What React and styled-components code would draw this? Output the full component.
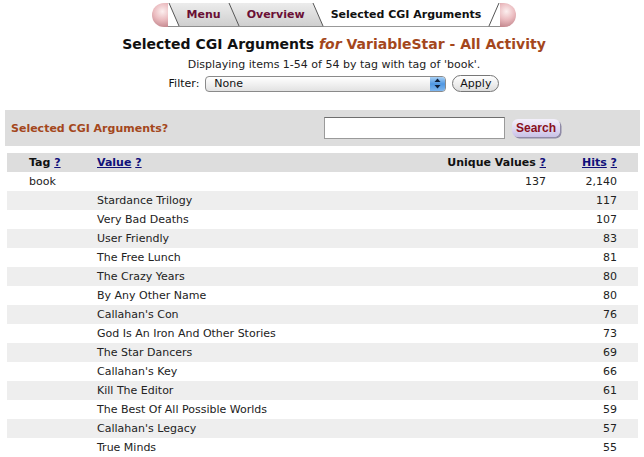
import React from 'react';
import styled, {createGlobalStyle} from 'styled-components';

const GlobalStyle = createGlobalStyle`
  body {
    margin: 0;
    background: #fff;
    font-family: "DejaVu Sans", Verdana, sans-serif;
    color: #111;
  }
`;

const Page = styled.div`
  width: 644px;
  padding: 0 4px;
  box-sizing: border-box;
`;

// everything in the head block is centred a bit right of the page middle
const Header = styled.div`
  padding-left: 24px;
`;

const TabBarWrap = styled.div`
  display: flex;
  justify-content: center;
  padding-top: 3px;
  height: 27px;
  box-sizing: border-box;
`;

const TabBar = styled.div`
  display: flex;
  align-items: stretch;
  height: 24px;
`;

const Cap = styled.div`
  width: 16px;
  background: radial-gradient(circle at ${p => (p.$right ? '40%' : '65%')} 35%, #fcefef 0%, #ebbcc0 45%, #b8787f 100%);
  border-radius: ${p => (p.$right ? '0 12px 12px 0' : '12px 0 0 12px')};
`;

const Tab = styled.div`
  display: flex;
  align-items: center;
  padding: 0 7px;
  font-size: 11px;
  font-weight: bold;
  color: ${p => (p.$active ? '#111' : '#6a0f35')};
  background: ${p => (p.$active ? '#fff' : 'linear-gradient(#ececec, #cfcfcf)')};
  border-bottom: 1px solid ${p => (p.$active ? '#999' : '#8e8e8e')};
  box-sizing: border-box;
`;

const SepBox = styled.svg`
  display: block;
  width: 12px;
  height: 24px;
`;

const Sep = ({id, left, right, dir = 'back'}) => {
  const fill = c => (c === 'g' ? `url(#${id})` : c);
  const back = dir === 'back';
  return (
    <SepBox viewBox="0 0 12 24">
      <defs>
        <linearGradient id={id} x1="0" y1="0" x2="0" y2="1">
          <stop offset="0" stopColor="#ececec" />
          <stop offset="1" stopColor="#cfcfcf" />
        </linearGradient>
      </defs>
      <polygon points={back ? '0,0 1,0 11,23 0,23' : '0,0 11,0 1,23 0,23'} fill={fill(left)} />
      <polygon points={back ? '1,0 12,0 12,23 11,23' : '11,0 12,0 12,23 1,23'} fill={fill(right)} />
      <line x1={back ? 1 : 11} y1="0" x2={back ? 11 : 1} y2="23" stroke="#555" strokeWidth="1" />
      <line x1="0" y1="23.5" x2="12" y2="23.5" stroke="#8e8e8e" strokeWidth="1" />
    </SepBox>
  );
};

const Title = styled.h1`
  margin: 9px 0 0;
  text-align: center;
  font-size: 14px;
  font-weight: bold;
  color: #111;
`;

const Accent = styled.span`
  color: #a4471c;
  font-style: ${p => (p.$italic ? 'italic' : 'normal')};
`;

const Subtitle = styled.div`
  margin-top: 6px;
  text-align: center;
  font-size: 11px;
  color: #222;
`;

const FilterRow = styled.div`
  display: flex;
  justify-content: center;
  align-items: center;
  gap: 6px;
  margin-top: 4px;
  font-size: 11px;
`;

const Select = styled.div`
  position: relative;
  width: 241px;
  height: 16px;
  border: 1px solid #8a8a8a;
  border-radius: 4px;
  background: linear-gradient(#ffffff, #f1f1f1 50%, #e2e2e2);
  box-sizing: border-box;
  display: flex;
  align-items: center;
  padding-left: 8px;
  font-size: 11px;
  overflow: hidden;
`;

const Stepper = styled.div`
  position: absolute;
  right: 0;
  top: 0;
  bottom: 0;
  width: 15px;
  background: linear-gradient(#a9d1f5, #4f97e3 50%, #7fb7ef);
  display: flex;
  align-items: center;
  justify-content: center;
`;

const PillButton = styled.div`
  height: 17px;
  padding: 0 7px;
  border: 1px solid #777;
  border-radius: 9px;
  background: linear-gradient(#fff, #ececec 60%, #dcdcdc);
  display: flex;
  align-items: center;
  font-size: 11px;
  box-sizing: border-box;
`;

const SearchBar = styled.div`
  margin-top: 18px;
  height: 36px;
  background: #dddddd;
  display: flex;
  align-items: center;
  padding: 0 80px 0 6px;
  margin-left: 1px;
`;

const SearchLabel = styled.div`
  flex: 1;
  font-size: 11px;
  font-weight: bold;
  color: #a4471c;
`;

const SearchInput = styled.div`
  width: 181px;
  height: 22px;
  background: #fff;
  border: 1px solid #9a9a9a;
  border-top-color: #6e6e6e;
  box-sizing: border-box;
`;

const SearchButton = styled.div`
  margin-left: 7px;
  height: 18px;
  padding: 0 4px;
  border-radius: 6px;
  background: linear-gradient(#f3f0fb, #dcd6f0 60%, #c9c1e6);
  box-shadow: 1.5px 1.5px 0 #8f8aa6;
  display: flex;
  align-items: center;
  font-family: "Liberation Sans", Arial, sans-serif;
  font-size: 12px;
  font-weight: bold;
  color: #8a1020;
`;

const Table = styled.div`
  margin: 7px 2px 0 3px;
`;

const Row = styled.div`
  display: grid;
  grid-template-columns: 90px 1fr 120px 71px;
  height: 19px;
  align-items: center;
  padding-right: 21px;
  font-size: 11px;
  color: #222;
  background: ${p => (p.$head ? '#dddddd' : p.$alt ? '#eeeeee' : '#fff')};
  font-weight: ${p => (p.$head ? 'bold' : 'normal')};
`;

const Cell = styled.div`
  white-space: nowrap;
  padding-left: ${p => (p.$pad ? '22px' : '0')};
  text-align: ${p => (p.$right ? 'right' : 'left')};
  color: ${p => (p.$head ? '#111' : 'inherit')};
`;

const HelpLink = styled.a`
  color: #10107a;
  text-decoration: underline;
`;

const rows = [
  ['Stardance Trilogy', '117'],
  ['Very Bad Deaths', '107'],
  ['User Friendly', '83'],
  ['The Free Lunch', '81'],
  ['The Crazy Years', '80'],
  ['By Any Other Name', '80'],
  ["Callahan's Con", '76'],
  ['God Is An Iron And Other Stories', '73'],
  ['The Star Dancers', '69'],
  ["Callahan's Key", '66'],
  ['Kill The Editor', '61'],
  ['The Best Of All Possible Worlds', '59'],
  ["Callahan's Legacy", '57'],
  ['True Minds', '55'],
];

export default function App() {
  return (
    <Page>
      <GlobalStyle />
      <Header>
        <TabBarWrap>
          <TabBar>
            <Cap />
            <Sep id="s1" left="transparent" right="g" />
            <Tab>Menu</Tab>
            <Sep id="s2" left="g" right="g" />
            <Tab>Overview</Tab>
            <Sep id="s3" left="g" right="#fff" />
            <Tab $active>Selected CGI Arguments</Tab>
            <Sep id="s4" left="#fff" right="transparent" dir="fwd" />
            <Cap $right />
          </TabBar>
        </TabBarWrap>

        <Title>
          Selected CGI Arguments <Accent $italic>for</Accent> <Accent>VariableStar - All Activity</Accent>
        </Title>
        <Subtitle>Displaying items 1-54 of 54 by tag with tag of 'book'.</Subtitle>

        <FilterRow>
          <span>Filter:</span>
          <Select>
            None
            <Stepper>
              <svg width="7" height="11" viewBox="0 0 7 11">
                <polygon points="3.5,0.5 6.5,4 0.5,4" fill="#10203a" />
                <polygon points="0.5,7 6.5,7 3.5,10.5" fill="#10203a" />
              </svg>
            </Stepper>
          </Select>
          <PillButton>Apply</PillButton>
        </FilterRow>
      </Header>

      <SearchBar>
        <SearchLabel>Selected CGI Arguments?</SearchLabel>
        <SearchInput />
        <SearchButton>Search</SearchButton>
      </SearchBar>

      <Table>
        <Row $head>
          <Cell $pad $head>Tag <HelpLink href="#">?</HelpLink></Cell>
          <Cell><HelpLink href="#">Value</HelpLink> <HelpLink href="#">?</HelpLink></Cell>
          <Cell $right $head>Unique Values <HelpLink href="#">?</HelpLink></Cell>
          <Cell $right><HelpLink href="#">Hits</HelpLink> <HelpLink href="#">?</HelpLink></Cell>
        </Row>
        <Row>
          <Cell $pad>book</Cell>
          <Cell />
          <Cell $right>137</Cell>
          <Cell $right>2,140</Cell>
        </Row>
        {rows.map(([name, hits], i) => (
          <Row key={name} $alt={i % 2 === 0}>
            <Cell />
            <Cell>{name}</Cell>
            <Cell />
            <Cell $right>{hits}</Cell>
          </Row>
        ))}
      </Table>
    </Page>
  );
}
